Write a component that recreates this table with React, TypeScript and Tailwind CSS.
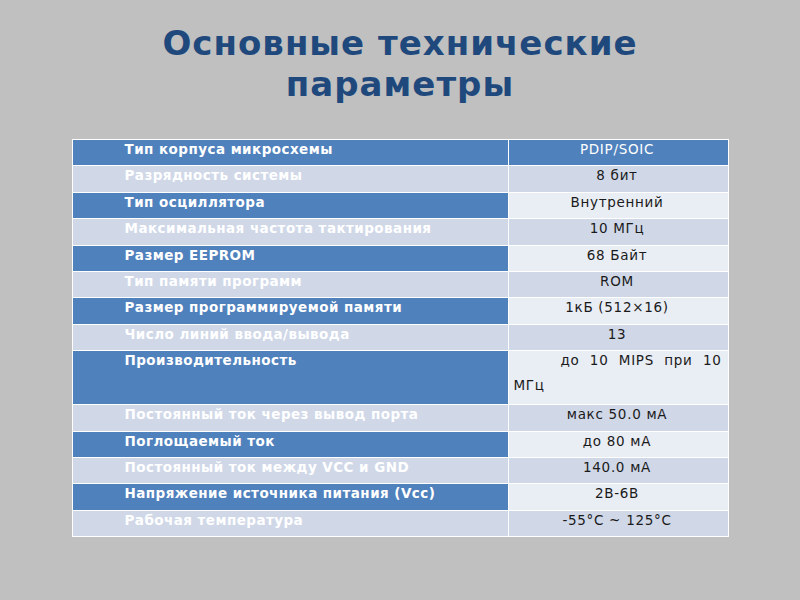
import React from "react";

type Row = { label: string; value: string; blue: boolean; tall?: boolean };

const rows: Row[] = [
  { label: "Тип корпуса микросхемы", value: "PDIP/SOIC", blue: true },
  { label: "Разрядность системы", value: "8 бит", blue: false },
  { label: "Тип осциллятора", value: "Внутренний", blue: true },
  { label: "Максимальная частота тактирования", value: "10 МГц", blue: false },
  { label: "Размер EEPROM", value: "68 Байт", blue: true },
  { label: "Тип памяти программ", value: "ROM", blue: false },
  { label: "Размер программируемой памяти", value: "1кБ (512×16)", blue: true },
  { label: "Число линий ввода/вывода", value: "13", blue: false },
  { label: "Производительность", value: "", blue: true, tall: true },
  { label: "Постоянный ток через вывод порта", value: "макс 50.0 мА", blue: false },
  { label: "Поглощаемый ток", value: "до 80 мА", blue: true },
  { label: "Постоянный ток между VCC и GND", value: "140.0 мА", blue: false },
  { label: "Напряжение источника питания (Vcc)", value: "2В-6В", blue: true },
  { label: "Рабочая температура", value: "-55°C ~ 125°C", blue: false },
];

export default function App() {
  return (
    <div
      className="w-[800px] h-[600px] bg-[#c0c0c0] flex flex-col items-center"
      style={{ fontFamily: '"DejaVu Sans", Verdana, sans-serif' }}
    >
      <h1 className="mt-[23px] text-[34px] leading-[41px] font-bold text-[#1f497d] text-center tracking-[1px]">
        Основные технические
        <br />
        параметры
      </h1>
      <div className="mt-[34px] w-[657px] bg-white p-px flex flex-col gap-[1px]">
        {rows.map((r, i) => {
          const isHeader = i === 0;
          const leftBg = r.blue ? "bg-[#4f81bd]" : "bg-[#d0d8e8]";
          const rightBg = isHeader
            ? "bg-[#4f81bd]"
            : r.blue
            ? "bg-[#e9edf4]"
            : "bg-[#d0d8e8]";
          return (
            <div
              key={i}
              className={`flex gap-[1px] ${r.tall ? "h-[53px]" : "h-[25.4px]"}`}
            >
              <div
                className={`w-[435px] shrink-0 ${leftBg} pl-[52px] pt-0 text-white font-bold text-[13.5px] leading-[18px] tracking-[0.45px]`}
              >
                {r.label}
              </div>
              <div
                className={`flex-1 ${rightBg} pt-0 text-[13.5px] leading-[18px] tracking-[0.7px] ${
                  isHeader ? "text-white" : "text-[#1a1a1a]"
                }`}
              >
                {r.tall ? (
                  <div className="pl-[5px] pr-[6px]">
                    <div className="flex justify-between pl-[47px]">
                      <span>до</span>
                      <span>10</span>
                      <span>MIPS</span>
                      <span>при</span>
                      <span>10</span>
                    </div>
                    <div className="mt-[7px]">МГц</div>
                  </div>
                ) : (
                  <div className="text-center pr-[2px]">{r.value}</div>
                )}
              </div>
            </div>
          );
        })}
      </div>
    </div>
  );
}
